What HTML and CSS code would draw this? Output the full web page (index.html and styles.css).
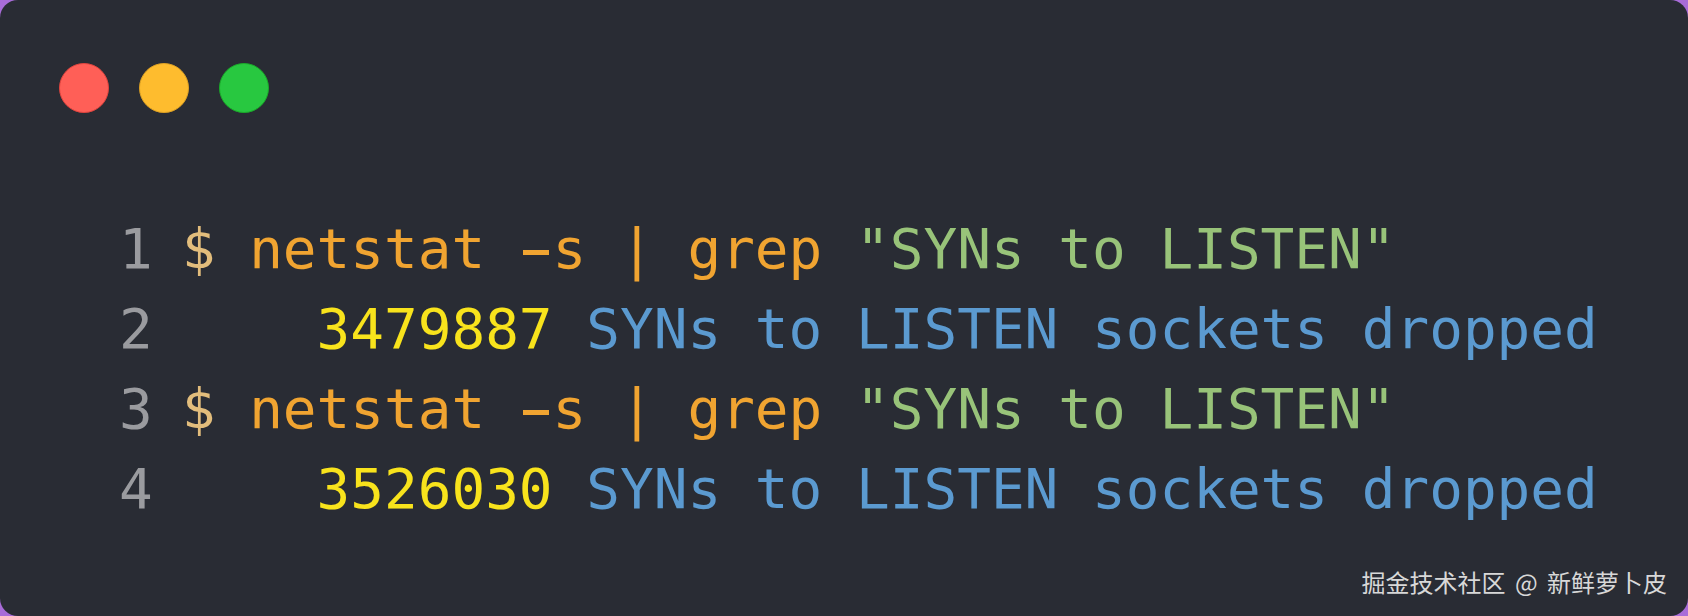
FILE: index.html
```html
<!DOCTYPE html>
<html lang="zh-CN">
<head>
<meta charset="utf-8">
<title>netstat SYNs</title>
<link rel="stylesheet" href="styles.css">
</head>
<body>
<div class="window">
  <div class="controls">
    <span class="dot red"></span>
    <span class="dot yellow"></span>
    <span class="dot green"></span>
  </div>
  <div class="code">
    <div class="line"><span class="ln">1</span><span class="src"><span class="prompt">$</span> <span class="cmd">netstat <span class="dash">-</span>s | grep</span> <span class="str">"SYNs to LISTEN"</span></span></div>
    <div class="line"><span class="ln">2</span><span class="src">    <span class="num">3479887</span> <span class="out">SYNs to LISTEN sockets dropped</span></span></div>
    <div class="line"><span class="ln">3</span><span class="src"><span class="prompt">$</span> <span class="cmd">netstat <span class="dash">-</span>s | grep</span> <span class="str">"SYNs to LISTEN"</span></span></div>
    <div class="line"><span class="ln">4</span><span class="src">    <span class="num">3526030</span> <span class="out">SYNs to LISTEN sockets dropped</span></span></div>
  </div>
  <div class="watermark">掘金技术社区 @ 新鲜萝卜皮</div>
</div>
</body>
</html>
```

FILE: styles.css
```css
html, body {
  margin: 0;
  padding: 0;
}

body {
  width: 1688px;
  height: 616px;
  background: #a86cd8;
  overflow: hidden;
}

.window {
  position: relative;
  box-sizing: border-box;
  width: 1688px;
  height: 616px;
  background: #292c34;
  border-radius: 18px;
  padding: 63px 0 0 59px;
  display: flex;
  flex-direction: column;
}

.controls {
  display: flex;
  gap: 30px;
}

.dot {
  display: block;
  width: 50px;
  height: 50px;
  border-radius: 50%;
  box-sizing: border-box;
}

.red {
  background: #ff5f57;
  border: 1px solid #e0443e;
}

.yellow {
  background: #febc2e;
  border: 1px solid #dea123;
}

.green {
  background: #28c840;
  border: 1px solid #1aab29;
}

.code {
  margin-top: 96px;
  margin-left: 60px;
  font-family: "DejaVu Sans Mono", monospace;
  font-size: 56px;
  line-height: 80px;
  display: flex;
  flex-direction: column;
}

.line {
  display: flex;
  white-space: pre;
}

.ln {
  width: 1ch;
  margin-right: 29px;
  color: #9a9b9f;
  text-align: right;
}

.prompt {
  color: #e2bd7c;
}

.cmd {
  color: #f0a431;
}

.dash {
  position: relative;
}

.dash::after {
  content: "";
  position: absolute;
  left: 4px;
  right: 4px;
  top: 34px;
  height: 5px;
  background: currentColor;
}

.str {
  color: #98c379;
}

.num {
  color: #f8e31c;
}

.out {
  color: #5b9ad0;
}

.watermark {
  position: absolute;
  right: 21px;
  bottom: 18px;
  font-family: "Noto Sans CJK SC", sans-serif;
  font-size: 24px;
  line-height: 32px;
  word-spacing: 4px;
  color: #d8d8d8;
}
```
